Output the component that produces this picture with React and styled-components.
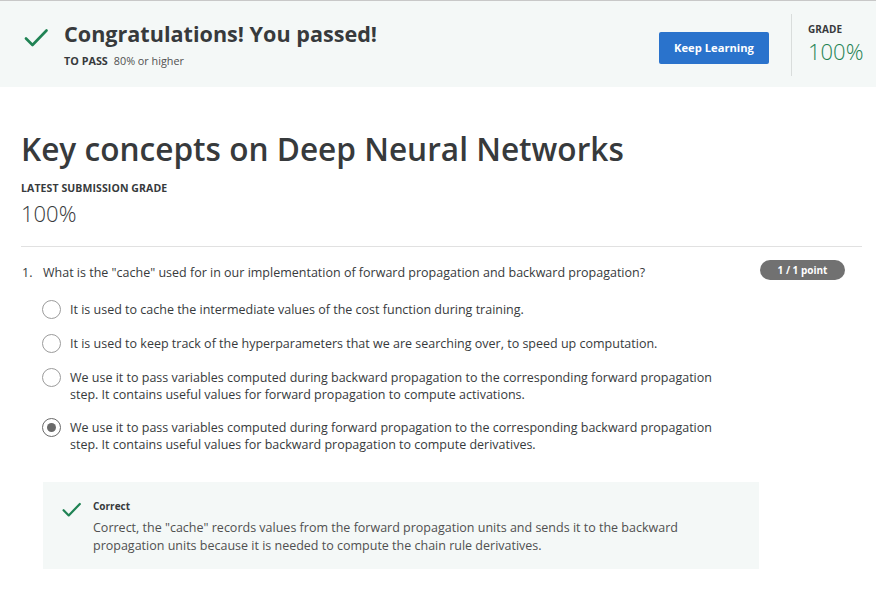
import React from "react";
import styled, { createGlobalStyle } from "styled-components";

const Global = createGlobalStyle`
  html, body { margin: 0; padding: 0; background: #fff; }
  body { font-family: "Open Sans", "Noto Sans", sans-serif; color: #1f1f1f; }
  * { box-sizing: border-box; }
`;

const Page = styled.div`
  width: 876px;
  min-height: 594px;
  border-top: 1px solid #c8c8c8;
`;

const Banner = styled.header`
  display: flex;
  align-items: center;
  height: 86px;
  background: #f4f8f7;
  padding: 0 12px 0 24px;
`;

const BannerCheck = styled.div`
  width: 24px;
  height: 20px;
  margin-right: 16px;
  margin-top: -12px;
  display: flex;
`;

const BannerText = styled.div`
  flex: 1;
  display: flex;
  flex-direction: column;
  gap: 5px;
`;

const BannerTitle = styled.h1`
  margin: 0;
  font-size: 21.6px;
  line-height: 28px;
  font-weight: 700;
  color: #373a3c;
`;

const PassLine = styled.div`
  font-size: 10.8px;
  color: #505050;
  strong { font-weight: 700; color: #373a3c; margin-right: 6px; }
`;

const Button = styled.button`
  width: 110px;
  height: 32px;
  border: none;
  border-radius: 2px;
  background: #2a73cc;
  color: #fff;
  font-family: inherit;
  font-size: 11.2px;
  font-weight: 700;
  margin-right: 22px;
  margin-top: 7px;
`;

const GradeBox = styled.div`
  align-self: stretch;
  margin: 13px 0 11px;
  border-left: 1px solid #d9dddc;
  padding: 9px 0 0 16px;
  width: 73px;
`;

const Label = styled.div`
  font-size: ${(p) => p.size || 10}px;
  line-height: 12px;
  font-weight: 700;
  color: #373a3c;
  letter-spacing: 0.1px;
`;

const BigGrade = styled.div`
  font-size: 22px;
  font-weight: 300;
  color: ${(p) => p.color || "#373a3c"};
  line-height: 24px;
  margin-top: ${(p) => p.top || 0}px;
`;

const Content = styled.main`
  padding: 40px 14px 0 21px;
`;

const Title = styled.h2`
  margin: 0 0 11px;
  font-size: 31.6px;
  line-height: 44px;
  font-weight: 600;
  color: #373a3c;
`;

const Summary = styled.div`
  padding-bottom: 21px;
  border-bottom: 1px solid #e1e1e1;
`;

const Question = styled.section`
  padding-top: 16px;
`;

const QuestionHead = styled.div`
  display: flex;
  align-items: flex-start;
  font-size: 12.5px;
  line-height: 17px;
  color: #373a3c;
`;

const QNum = styled.span`
  width: 22px;
  padding-left: 1px;
  padding-top: 1px;
`;

const QText = styled.span`
  flex: 1;
  padding-top: 1px;
`;

const Badge = styled.span`
  background: #717171;
  color: #fff;
  font-size: 10px;
  font-weight: 700;
  border-radius: 10px;
  width: 85px;
  height: 20px;
  display: inline-flex;
  align-items: center;
  justify-content: center;
  margin-right: 17px;
  margin-top: -3px;
`;

const Options = styled.div`
  display: flex;
  flex-direction: column;
  gap: 16px;
  padding: 20px 0 0 21px;
  width: 710px;
`;

const Option = styled.label`
  display: flex;
  align-items: flex-start;
  gap: 9px;
  font-size: 12.5px;
  line-height: 17px;
  color: #373a3c;
`;

const Radio = styled.span`
  flex: none;
  width: 19px;
  height: 19px;
  border-radius: 50%;
  border: 1.5px solid ${(p) => (p.checked ? "#6a6a6a" : "#9b9b9b")};
  display: flex;
  align-items: center;
  justify-content: center;
  margin-top: -1px;
  &::after {
    content: "";
    width: 9px;
    height: 9px;
    border-radius: 50%;
    background: #6a6a6a;
    display: ${(p) => (p.checked ? "block" : "none")};
  }
`;

const Feedback = styled.div`
  margin: 29px 0 0 22px;
  width: 716px;
  background: #f4f8f7;
  display: flex;
  gap: 12px;
  padding: 17px 20px 14px 19px;
`;

const FeedbackIcon = styled.div`
  flex: none;
  padding-top: 1px;
`;

const FeedbackBody = styled.div`
  width: 610px;
  display: flex;
  flex-direction: column;
  gap: 6px;
  font-size: 12.5px;
  line-height: 18px;
  color: #505050;
`;

const FeedbackTitle = styled.div`
  font-size: 10px;
  font-weight: 700;
  color: #373a3c;
  line-height: 14px;
`;

const Check = ({ w = 24, h = 19, sw = 2.6 }) => (
  <svg width={w} height={h} viewBox="0 0 24 19" preserveAspectRatio="none" fill="none">
    <path d="M2 10.5 L8.5 17 L22.5 2.5" stroke="#1f8354" strokeWidth={sw} strokeLinecap="round" strokeLinejoin="round" />
  </svg>
);

const options = [
  { text: "It is used to cache the intermediate values of the cost function during training." },
  { text: "It is used to keep track of the hyperparameters that we are searching over, to speed up computation." },
  { text: "We use it to pass variables computed during backward propagation to the corresponding forward propagation step. It contains useful values for forward propagation to compute activations." },
  { text: "We use it to pass variables computed during forward propagation to the corresponding backward propagation step. It contains useful values for backward propagation to compute derivatives.", checked: true },
];

export default function App() {
  return (
    <Page>
      <Global />
      <Banner>
        <BannerCheck><Check w={24} h={19} /></BannerCheck>
        <BannerText>
          <BannerTitle>Congratulations! You passed!</BannerTitle>
          <PassLine><strong>TO PASS</strong>80% or higher</PassLine>
        </BannerText>
        <Button>Keep Learning</Button>
        <GradeBox>
          <Label>GRADE</Label>
          <BigGrade color="#1f8354" top={4}>100%</BigGrade>
        </GradeBox>
      </Banner>
      <Content>
        <Summary>
          <Title>Key concepts on Deep Neural Networks</Title>
          <Label size={10.5}>LATEST SUBMISSION GRADE</Label>
          <BigGrade top={7}>100%</BigGrade>
        </Summary>
        <Question>
          <QuestionHead>
            <QNum>1.</QNum>
            <QText>What is the "cache" used for in our implementation of forward propagation and backward propagation?</QText>
            <Badge>1 / 1 point</Badge>
          </QuestionHead>
          <Options>
            {options.map((o, i) => (
              <Option key={i}>
                <Radio checked={o.checked} />
                <span>{o.text}</span>
              </Option>
            ))}
          </Options>
          <Feedback>
            <FeedbackIcon><Check w={19} h={15} sw={2.8} /></FeedbackIcon>
            <FeedbackBody>
              <FeedbackTitle>Correct</FeedbackTitle>
              <div>Correct, the "cache" records values from the forward propagation units and sends it to the backward propagation units because it is needed to compute the chain rule derivatives.</div>
            </FeedbackBody>
          </Feedback>
        </Question>
      </Content>
    </Page>
  );
}
